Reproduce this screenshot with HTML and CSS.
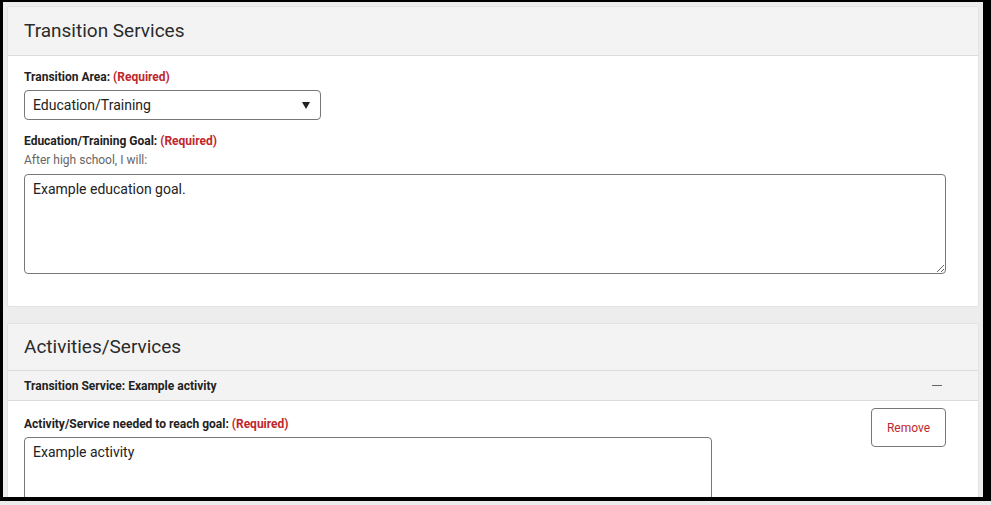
FILE: index.html
```html
<!DOCTYPE html>
<html lang="en">
<head>
  <meta charset="UTF-8" />
  <title>Transition Services</title>
  <link rel="stylesheet" href="styles.css">
</head>
<body>

<div class="frame">
  <div class="page">

    <div class="card">
      <div class="card-header">Transition Services</div>
      <div class="card-body">
        <div class="field">
          <label class="label">Transition Area: <span class="req">(Required)</span></label>
          <div class="select-wrap">
            <select class="select">
              <option>Education/Training</option>
            </select>
            <span class="caret"></span>
          </div>
        </div>

        <div class="field">
          <label class="label">Education/Training Goal: <span class="req">(Required)</span></label>
          <div class="hint">After high school, I will:</div>
          <textarea class="textarea goal">Example education goal.</textarea>
        </div>
      </div>
    </div>

    <div class="card">
      <div class="card-header short">Activities/Services</div>
      <div class="sub-header">
        <span>Transition Service: Example activity</span>
        <span class="collapse"></span>
      </div>
      <div class="card-body row">
        <div class="field activity">
          <label class="label">Activity/Service needed to reach goal: <span class="req">(Required)</span></label>
          <textarea class="textarea">Example activity</textarea>
        </div>
        <button class="btn-remove">Remove</button>
      </div>
    </div>

  </div>
</div>

</body>
</html>
```

FILE: styles.css
```css
* {
  box-sizing: border-box;
}
body {
  margin: 0;
  background: #ececec;
  font-family: Roboto, 'Liberation Sans', Arial, sans-serif;
  color: #222;
}

.frame {
  width: 991px;
  height: 501px;
  border-style: solid;
  border-color: #000;
  border-width: 2px 8px 4px 3px;
  background: #ededed;
  overflow: hidden;
}

.page {
  padding: 4px 4px 0 4px;
}

.card {
  background: #fff;
  border: 1px solid #e2e2e2;
  border-radius: 2px;
  margin-bottom: 16px;
}

.card-header {
  background: #f3f3f3;
  border-bottom: 1px solid #dcdcdc;
  height: 49px;
  padding: 0 16px;
  font-size: 19px;
  line-height: 48px;
  color: #2b2b2b;
}

.card-header.short {
  height: 47px;
  line-height: 46px;
}

.card-body {
  padding: 14px 32px 32px 16px;
}

.field + .field {
  margin-top: 14px;
}

.label {
  display: block;
  font-size: 12px;
  font-weight: bold;
  line-height: 14px;
  color: #222;
  margin-bottom: 6px;
}

.req {
  color: #c0272d;
}

.hint {
  font-size: 12px;
  color: #666;
  line-height: 14px;
  margin-top: -1px;
  margin-bottom: 7px;
}

.select-wrap {
  position: relative;
  width: 297px;
}

.select {
  appearance: none;
  width: 100%;
  height: 30px;
  border: 1px solid #777;
  border-radius: 4px;
  background: #fff;
  padding: 0 8px;
  font-family: inherit;
  font-size: 14px;
  color: #222;
}

.caret {
  position: absolute;
  right: 11px;
  top: 12px;
  width: 0;
  height: 0;
  border-left: 4px solid transparent;
  border-right: 4px solid transparent;
  border-top: 7px solid #222;
}

.textarea {
  display: block;
  width: 100%;
  border: 1px solid #777;
  border-radius: 4px;
  padding: 6px 8px;
  font-family: inherit;
  font-size: 14px;
  line-height: 16px;
  color: #222;
}

.goal {
  height: 100px;
}

.sub-header {
  display: flex;
  justify-content: space-between;
  align-items: center;
  height: 30px;
  padding: 0 36px 0 16px;
  background: #f3f3f3;
  border-bottom: 1px solid #dcdcdc;
  font-size: 12px;
  font-weight: bold;
  color: #222;
}

.collapse {
  width: 10px;
  height: 1px;
  background: #666;
}

.row {
  display: flex;
  justify-content: space-between;
  align-items: flex-start;
  padding-top: 16px;
}

.activity {
  width: 688px;
}

.activity .textarea {
  height: 100px;
}

.btn-remove {
  margin-top: -9px;
  width: 75px;
  height: 39px;
  background: #fff;
  border: 1px solid #777;
  border-radius: 4px;
  color: #c0272d;
  font-family: inherit;
  font-size: 12px;
  cursor: pointer;
}
```
